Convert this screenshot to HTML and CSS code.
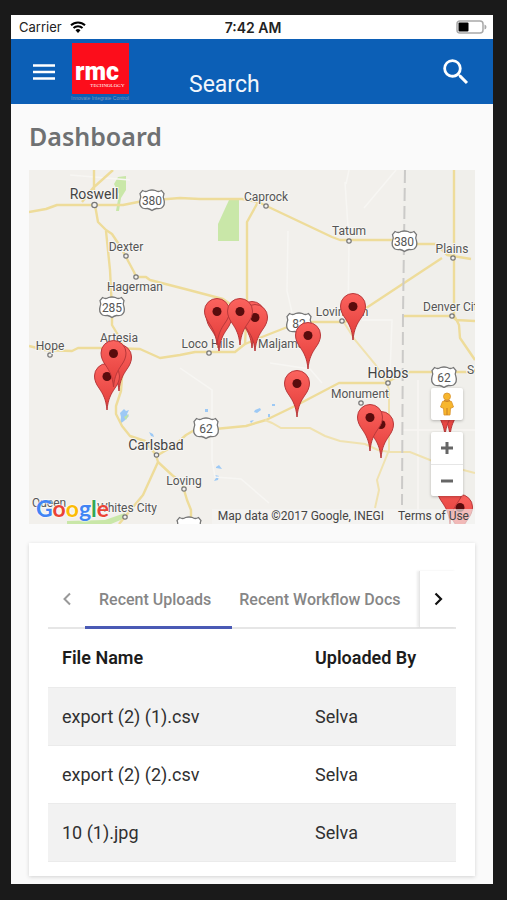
FILE: index.html
```html
<!DOCTYPE html>
<html lang="en">
<head>
<meta charset="utf-8">
<meta name="viewport" content="width=device-width, initial-scale=1">
<title>Dashboard</title>
<link rel="stylesheet" href="styles.css">
</head>
<body>
<div class="screen">
  <div class="status">
    <div class="status-left">
      <span>Carrier</span>
      <svg width="16" height="12" viewBox="0 0 16 12" aria-hidden="true">
        <path d="M1 4.300a10 10 0 0 1 14 0M3.500 7a6.400 6.400 0 0 1 9 0" fill="none" stroke="#000" stroke-width="2"/>
        <path d="M5.500 9.200a3.600 3.600 0 0 1 5 0L8 12z"/>
      </svg>
    </div>
    <strong class="clock">7:42 AM</strong>
    <svg class="battery" width="31" height="14" viewBox="0 0 31 14" aria-hidden="true">
      <rect x="1" y="1" width="26" height="12" rx="3" fill="#fff" stroke="#a9a9a9" stroke-width="1.500"/>
      <rect x="2.500" y="2.500" width="10" height="9" rx="1"/>
      <path d="M28.500 4.500q2 .5 2 2.500t-2 2.500z" fill="#a9a9a9"/>
    </svg>
  </div>

  <header class="bar">
    <button class="icon-btn menu" type="button" aria-label="Menu">
      <svg width="22" height="16" viewBox="0 0 22 16"><path d="M0 1.500h22M0 8h22M0 14.500h22" stroke="#fff" stroke-width="2.400"/></svg>
    </button>
    <a class="logo" href="#">
      <span class="logo-box"><span class="logo-name">rmc</span><span class="logo-sub">TECHNOLOGY</span></span>
      <span class="logo-tag">Innovate Integrate Control</span>
    </a>
    <input class="search" type="text" placeholder="Search" aria-label="Search">
    <button class="icon-btn find" type="button" aria-label="Run search">
      <svg width="34" height="34" viewBox="0 0 24 24" fill="#fff"><path d="M15.500 14h-.79l-.28-.27A6.471 6.471 0 0 0 16 9.500 6.500 6.500 0 1 0 9.500 16c1.610 0 3.090-.59 4.230-1.570l.27.28v.79l5 4.990L20.490 19l-4.990-5zm-6 0C7.010 14 5 11.990 5 9.500S7.010 5 9.500 5 14 7.010 14 9.500 11.990 14 9.500 14z"/></svg>
    </button>
  </header>

  <main class="content">
    <h1>Dashboard</h1>

    <section class="map" aria-label="Map">
      <svg class="map-canvas" viewBox="29 170 446 354" preserveAspectRatio="xMidYMid slice">
        <defs>
          <linearGradient id="red" x1="0" y1="0" x2="0" y2="1"><stop offset="0" stop-color="#fb635e"/><stop offset="1" stop-color="#e23c39"/></linearGradient>
          <g id="pin">
            <path d="M0 0C-1-11-4-16-8-22-11-26-12.500-30-12.500-34A12.500 12.500 0 0 1 12.500-34C12.500-30 11-26 8-22 4-16 1-11 0 0Z" fill="url(#red)" stroke="#b8383a" stroke-width="1"/>
            <circle cy="-33.500" r="4.500" fill="#590c0d"/>
          </g>
          <path id="shield" d="M-9.500-9.500Q-6-7.500-3.500-9.500Q0-10.500 3.500-9.500Q6-7.500 9.500-9.500L12-6.500Q10.500-3 12 0Q13.500 5 9.500 8Q7 9 4.500 8.500Q2 9 0 10.500Q-2 9-4.500 8.500Q-7 9-9.500 8Q-13.500 5-12 0Q-10.500-3-12-6.500Z" fill="#fff" stroke="#777" stroke-width="1.300"/>
        </defs>
        <rect x="29" y="170" width="446" height="354" fill="#f2f0ec"/>
        <path d="M403 170h72v354h-73z" fill="#f0efeb"/>

        <g fill="#c9e7a8">
          <path d="M114 184l4-7 8-1v14l-5 8-2 13h-3l3-17z"/>
          <path d="M229 200h10v41h-21v-17z"/>
          <path d="M67 521l38-1 20-7-2 6-12 5H67z"/>
        </g>
        <g fill="#9dc9f5">
          <path d="M120 413l4-4 2 2 3-1-2 4 2 2-5 5-4 3 1-7zM149 432l4 2 1 3-3-1zM255 410l5-2 1 2-4 3-3-1zM216 467l3-2 3 4-6-1zM215 475l4 1-1 4-4 1 2-3zM250 421l4-1-3 3zM272 404h3v2h-3zM205 409h3v3h-3zM268 414h2v3h-2z"/>
        </g>
        <path d="M124 417l5-3-3 6z" fill="#bfe3a6"/>

        <g fill="none" stroke="#f7f6f3" stroke-width="1.500">
          <path d="M345 182l4 60-1 78M396 170l-32 38M288 231l-1 60 7 30M180 368l32 22v70l3 17 26 2 28 24M270 363l40 6 12 14M349 170l-3 14M362 320h30l-2 54M402 430h73M418 380v144M130 180l-60-5"/>
        </g>

        <g fill="none" stroke="#eedc9a" stroke-width="2.400" stroke-linejoin="round">
          <path d="M29 212l17-3 11-4h66l20-4 37-3 20 1h42l16 3 74 35 8 3h62l8 4h26l11 11 24 4"/>
          <path d="M94 170v20M113 170L93 188 82 202M95 205l3 17 8 8 6 4 8 12 6 11 8 15 2 5h10l4 3 35 9 38 10 17 12"/>
          <path d="M106 231l4 39 2 40v15l6 10 6 15-3 41-5 15v8l6 12 8 10 15 5 11 14 2 7-15 33-24 29"/>
          <path d="M158 462l14 13 10 8 5 17 4 10v14M158 455l17-10 11-10 12-7 17 1 31-3 20-6 31-15 42-22h47l7-4 17-7h65"/>
          <path d="M29 346l16 4 27 1 6-3h32l30 1 20 9 20-3 15-3h40l10-8 17-7 28-11 15-4h40l97-64"/>
          <path d="M258 202l-11 20v80l-2 43M454 170v145l5 10 1 13 15 22M403 316h49l4 4 19 1"/>
        </g>
        <g fill="none" stroke="#f0e2b0" stroke-width="2">
          <path d="M265 420l7 3 9 5h29l15 8 15 5 25 3 13 6 11 2h21l20 8 18 6 27 7M343 321l12 19 20 24 12 19 2 7v60l-12 30 2 10-4 18"/>
        </g>
        <path d="M405 170l-2 145-1 190" fill="none" stroke="#cbcac8" stroke-width="2" stroke-dasharray="13 5"/>

        <g fill="#f2f0ec" stroke="#777" stroke-width="1.200">
          <circle cx="94.500" cy="205" r="2.700"/><circle cx="126" cy="256" r="2.200"/><circle cx="136" cy="277" r="2.200"/><circle cx="266" cy="206" r="2.200"/><circle cx="349" cy="241" r="2.200"/><circle cx="453" cy="258" r="2.200"/><circle cx="452" cy="316" r="2.200"/><circle cx="342" cy="321" r="2.200"/><circle cx="50" cy="355" r="2.200"/><circle cx="209" cy="353" r="2.200"/><circle cx="388" cy="383" r="2.200"/><circle cx="361" cy="403" r="2.200"/><circle cx="156.500" cy="455" r="2.200"/><circle cx="184" cy="489" r="2.200"/><circle cx="125" cy="517" r="2.200"/>
        </g>

        <use href="#shield" x="152" y="200"/><use href="#shield" x="112" y="307"/><use href="#shield" x="299" y="323"/><use href="#shield" x="404.500" y="241"/><use href="#shield" x="206" y="428"/><use href="#shield" x="444" y="377"/><use href="#shield" x="189" y="527"/>
        <g class="route">
          <text x="152" y="205">380</text><text x="112" y="312">285</text><text x="299" y="328">82</text><text x="404" y="246">380</text><text x="206" y="433">62</text><text x="444" y="382">62</text>
        </g>

        <g class="town">
          <text x="126" y="251">Dexter</text><text x="135" y="291">Hagerman</text><text x="266" y="201">Caprock</text><text x="349" y="235">Tatum</text><text x="452" y="253">Plains</text><text x="423" y="311" class="from">Denver City</text><text x="119" y="342">Artesia</text><text x="50" y="350">Hope</text><text x="208" y="348">Loco Hills</text><text x="258" y="348" class="from">Maljamar</text><text x="342" y="316">Lovington</text><text x="360" y="398">Monument</text><text x="184" y="485">Loving</text><text x="32" y="507" class="from">Queen</text><text x="97" y="512" class="from">Whites City</text><text x="467" y="374" class="from">Seminole</text>
        </g>
        <g class="town big">
          <text x="94" y="199">Roswell</text><text x="388" y="378">Hobbs</text><text x="156" y="450">Carlsbad</text>
        </g>

        <use href="#pin" x="119" y="391"/><use href="#pin" x="107" y="410"/><use href="#pin" x="113.500" y="387"/>
        <use href="#pin" x="219" y="351"/><use href="#pin" x="217" y="345"/>
        <use href="#pin" x="252" y="348"/><use href="#pin" x="255" y="351"/><use href="#pin" x="240" y="345"/>
        <use href="#pin" x="353" y="340"/><use href="#pin" x="308" y="369"/><use href="#pin" x="297" y="417"/>
        <use href="#pin" x="381" y="458"/><use href="#pin" x="370" y="451"/>
        <use href="#pin" x="450" y="436"/><use href="#pin" x="445" y="436"/>
        <use href="#pin" x="460" y="541"/><use href="#pin" x="450" y="524"/>
      </svg>

      <div class="map-controls">
        <button class="pegman" type="button" aria-label="Street View">
          <svg width="16" height="24" viewBox="0 0 16 24"><g fill="#f7b62d" stroke="#d8902a" stroke-width=".8"><path d="M3.500 9.500Q8 7 12.500 9.500L14.500 15l-2 1-1 0-.5 7H5L4.500 16h-1l-2-1z"/><circle cx="8" cy="4.500" r="3.500"/></g><path d="M8 16v7M5 8.500q3 2 6 0" fill="none" stroke="#c77d22"/></svg>
        </button>
        <div class="zoom">
          <button type="button" aria-label="Zoom in"><svg width="12" height="12" viewBox="0 0 12 12"><path d="M0 6h12M6 0v12" stroke="#666" stroke-width="3"/></svg></button>
          <button type="button" aria-label="Zoom out"><svg width="12" height="12" viewBox="0 0 12 12"><path d="M0 6h12" stroke="#666" stroke-width="3"/></svg></button>
        </div>
      </div>
      <a class="google" href="#" aria-label="Google"><span class="b">G</span><span class="r">o</span><span class="y">o</span><span class="b">g</span><span class="g">l</span><span class="r">e</span></a>
      <div class="credits"><span>Map data ©2017 Google, INEGI</span><a href="#">Terms of Use</a></div>
    </section>

    <section class="card">
      <div class="tabs">
        <button class="arrow" type="button" aria-label="Previous tabs" disabled><svg width="8" height="14" viewBox="0 0 8 14"><path d="M7 1.500L1.500 7 7 12.500" fill="none" stroke="#999" stroke-width="2"/></svg></button>
        <div class="tab-list" role="tablist">
          <button class="tab active" type="button" role="tab" aria-selected="true">Recent Uploads</button>
          <button class="tab" type="button" role="tab" aria-selected="false">Recent Workflow Docs</button>
        </div>
        <button class="arrow next" type="button" aria-label="Next tabs"><svg width="9" height="14" viewBox="0 0 9 14"><path d="M1.500 1.500L7 7l-5.500 5.500" fill="none" stroke="#111" stroke-width="2.200"/></svg></button>
      </div>
      <table>
        <thead><tr><th scope="col">File Name</th><th scope="col">Uploaded By</th></tr></thead>
        <tbody>
          <tr><td>export (2) (1).csv</td><td>Selva</td></tr>
          <tr><td>export (2) (2).csv</td><td>Selva</td></tr>
          <tr><td>10 (1).jpg</td><td>Selva</td></tr>
        </tbody>
      </table>
    </section>
  </main>
</div>
</body>
</html>
```
FILE: styles.css
```css
* { box-sizing: border-box; }

html { background: #1a1a1a; }

body {
  margin: 0;
  padding: 15px 14px 16px 11px;
  font-family: Roboto, "Liberation Sans", sans-serif;
  color: #303030;
}

button {
  padding: 0;
  border: 0;
  background: none;
  font: inherit;
  color: inherit;
}

a { color: inherit; text-decoration: none; }

svg { display: block; }

.screen { background: #fafafa; }

/* Status bar */
.status {
  display: grid;
  grid-template-columns: 1fr auto 1fr;
  align-items: center;
  height: 24px;
  padding: 0 6px 0 8px;
  background: #fff;
  color: #222;
  font-family: Inter, sans-serif;
  font-size: 13px;
}

.status-left { display: flex; align-items: center; gap: 8px; }

.clock { font-size: 14px; font-weight: 600; }

.battery { justify-self: end; }

/* App bar */
.bar {
  display: flex;
  align-items: center;
  height: 65px;
  padding: 0 20px 0 22px;
  background: #0c5fb6;
  color: #fff;
}

.icon-btn { display: flex; flex: none; }

.logo {
  flex: none;
  width: 62px;
  margin-left: 14px;
  padding-top: 2px;
  text-align: center;
}

.logo-box {
  display: flex;
  flex-direction: column;
  justify-content: flex-end;
  width: 57px;
  height: 51px;
  margin: 0 auto;
  padding-bottom: 4px;
  background: #fc0d1b;
}

.logo-name {
  padding-right: 6px;
  font: 900 25px/20px Roboto, sans-serif;
}

.logo-sub {
  padding-right: 4px;
  font: 5px/8px "Liberation Serif", serif;
  text-align: right;
}

.logo-tag {
  display: block;
  font: 5px/8px "Liberation Sans", sans-serif;
  white-space: nowrap;
  color: #7e97b8;
}

.search {
  flex: 1;
  min-width: 0;
  height: 32px;
  margin: 26px 0 0 58px;
  padding: 0;
  border: 0;
  outline: 0;
  background: none;
  font: 23px/32px Roboto, sans-serif;
  color: #fff;
}

.search::placeholder { color: #f2f6fb; opacity: 1; }

/* Page */
.content { padding: 14px 18px 8px; }

h1 {
  margin: 0 0 16px;
  font: 600 25px/36px "Noto Sans", "Open Sans", sans-serif;
  color: #6f7173;
}

/* Map */
.map {
  position: relative;
  overflow: hidden;
}

.map-canvas { width: 100%; height: auto; }

.town, .route { text-anchor: middle; }

.town {
  font-size: 12px;
  fill: #555;
  stroke: #f7f6f3;
  stroke-width: 2px;
  paint-order: stroke;
}

.town.big { font-size: 14px; fill: #444; }

.town .from { text-anchor: start; }

.route { font-size: 12px; fill: #555; }

.map-controls {
  position: absolute;
  right: 12px;
  bottom: 28px;
  display: flex;
  flex-direction: column;
  gap: 12px;
  width: 32px;
}

.map-controls button {
  display: flex;
  align-items: center;
  justify-content: center;
  width: 100%;
  height: 32px;
}

.pegman, .zoom {
  border-radius: 2px;
  background: #fff;
  box-shadow: 0 1px 3px rgba(0, 0, 0, 0.25);
}

.map-controls .pegman { background: #fff; }

.zoom button + button { border-top: 1px solid #e6e6e6; }

.google {
  position: absolute;
  left: 7px;
  bottom: 1px;
  font: bold 23px/30px Lato, sans-serif;
  text-shadow: 0 0 2px #fff, 0 0 2px #fff;
}

.b { color: #4285f4; }
.r { color: #ea4335; }
.y { color: #fbbc05; }
.g { color: #34a853; }

.credits {
  position: absolute;
  right: 0;
  bottom: 0;
  display: flex;
  gap: 14px;
  padding: 0 6px;
  background: rgba(245, 245, 245, 0.65);
  font-size: 12px;
  line-height: 15px;
  color: #444;
}

/* Uploads card */
.card {
  margin-top: 19px;
  padding: 28px 19px 14px;
  background: #fff;
  box-shadow: 0 1px 4px rgba(0, 0, 0, 0.16);
}

.tabs {
  display: flex;
  height: 58px;
  border-bottom: 2px solid #e6e6e6;
}

.arrow {
  display: flex;
  flex: none;
  align-items: center;
  justify-content: center;
  width: 37px;
}

.next {
  border-left: 1px solid #e6e6e6;
  box-shadow: -2px 0 2px rgba(0, 0, 0, 0.08);
}

.tab-list {
  display: flex;
  flex: 1;
  min-width: 0;
  margin-bottom: -2px;
}

.tab {
  flex: none;
  padding: 2px 12px 0 7px;
  border-bottom: 3px solid transparent;
  font-size: 16px;
  font-weight: 500;
  color: #868686;
}

.tab.active {
  padding: 2px 21px 0 14px;
  border-color: #4a5ab5;
}

table {
  width: 100%;
  table-layout: fixed;
  border-collapse: collapse;
  font-size: 18px;
}

th, td {
  height: 58px;
  padding: 0 0 0 14px;
  border-bottom: 1px solid #ebebeb;
  text-align: left;
}

th {
  font-weight: 600;
  color: #1c1c1c;
}

th:first-child { width: 62%; }

tbody tr:nth-child(odd) { background: #f2f2f2; }
```
